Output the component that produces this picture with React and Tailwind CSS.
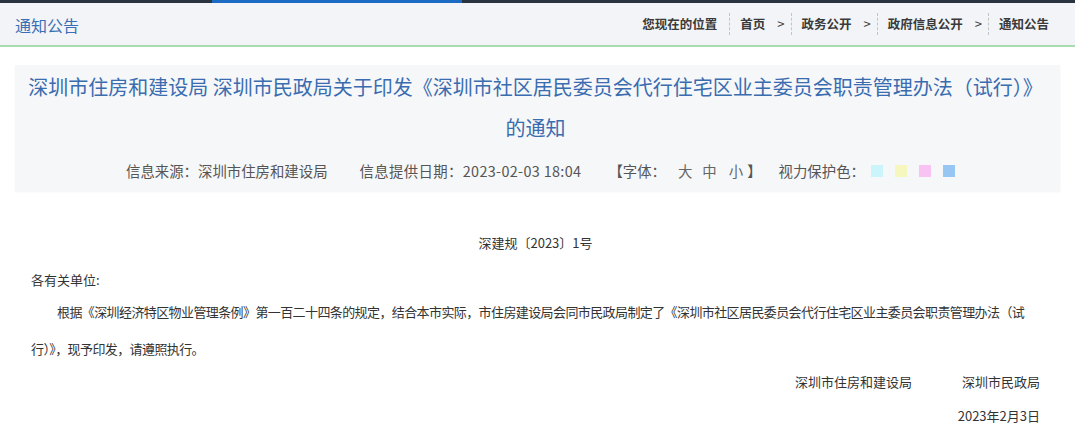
import React from "react";

const font = { fontFamily: '"Noto Sans CJK SC", "Noto Sans", sans-serif' };

function Sep() {
  return <span className="inline-block h-[22px] border-l border-dashed border-[#c4c4c4]" />;
}

function Crumb({ label, last }) {
  return (
    <div className="flex items-center">
      <span>{label}</span>
      {!last && (
        <>
          <span className="ml-[12px] font-normal text-[13px]">&gt;</span>
          <span className="ml-[6px] flex"><Sep /></span>
          <span className="w-[10px]" />
        </>
      )}
    </div>
  );
}

export default function App() {
  return (
    <div className="w-[1075px] h-[432px] bg-white overflow-hidden" style={font}>
      <div className="flex h-[3px]">
        <div className="w-[212px] bg-[#2a3441]" />
        <div className="w-[250px] bg-[#1b6bc4]" />
        <div className="flex-1 bg-[#2a3441]" />
      </div>
      <div className="h-[44px] bg-[#f2f4f7] border-b-2 border-[#a9dbb2] flex items-center justify-between pl-[15px] pr-[26px]">
        <div className="text-[16px] text-[#3b6fb5] pt-[2px]">通知公告</div>
        <div className="flex items-center text-[12.5px] font-bold text-[#3a3a3a]">
          <span>您现在的位置</span>
          <span className="ml-[12px] flex"><Sep /></span>
          <span className="w-[10px]" />
          <Crumb label="首页" />
          <Crumb label="政务公开" />
          <Crumb label="政府信息公开" />
          <Crumb label="通知公告" last />
        </div>
      </div>

      <div className="mx-[15px] mt-[18px] h-[126px] bg-[#f6f7f9] shadow-[0_1px_2px_rgba(0,0,0,0.05)] pt-[1px]">
        <h1 className="text-center text-[20px] leading-[41px] text-[#3a6cb0] pl-[4px] pr-[8px] font-normal">
          深圳市住房和建设局 深圳市民政局关于印发《深圳市社区居民委员会代行住宅区业主委员会职责管理办法（试行）》的通知
        </h1>
        <div className="flex items-center justify-center text-[14.4px] text-[#555] mt-[13px] leading-[20px] pl-[6px]">
          <span>信息来源：深圳市住房和建设局</span>
          <span className="ml-[32px] tracking-[0.35px]">信息提供日期：2023-02-03 18:04</span>
          <span className="ml-[27px] flex items-center">
            <span>【字体：</span>
            <span className="ml-[12px] text-[#666]">大</span>
            <span className="ml-[10px] text-[#666]">中</span>
            <span className="ml-[12px] text-[#666]">小</span>
            <span className="ml-[4px]">】</span>
          </span>
          <span className="ml-[17px]">视力保护色：</span>
          <span className="ml-[6px] flex items-center gap-[12px]">
            <span className="w-[12px] h-[12px] bg-[#ccf5fb]" />
            <span className="w-[12px] h-[12px] bg-[#f6f6bf]" />
            <span className="w-[12px] h-[12px] bg-[#f8c3f3]" />
            <span className="w-[12px] h-[12px] bg-[#98c6f2]" />
          </span>
        </div>
      </div>

      <div className="pl-[31px] pr-[35px] text-[13px] text-[#333]">
        <div className="mt-[42px] text-center leading-[20px]">深建规〔2023〕1号</div>
        <div className="mt-[17px] leading-[20px]">各有关单位:</div>
        <p className="mt-[3px] leading-[37px] indent-[26px] whitespace-nowrap tracking-[-0.6px]">
          根据《深圳经济特区物业管理条例》第一百二十四条的规定，结合本市实际，市住房建设局会同市民政局制定了《深圳市社区居民委员会代行住宅区业主委员会职责管理办法（试
          <br />
          行）》，现予印发，请遵照执行。
        </p>
        <div className="mt-[5px] leading-[20px] flex justify-end">
          <span>深圳市住房和建设局</span>
          <span className="ml-[50px]">深圳市民政局</span>
        </div>
        <div className="mt-[14px] leading-[20px] text-right">2023年2月3日</div>
      </div>
    </div>
  );
}
